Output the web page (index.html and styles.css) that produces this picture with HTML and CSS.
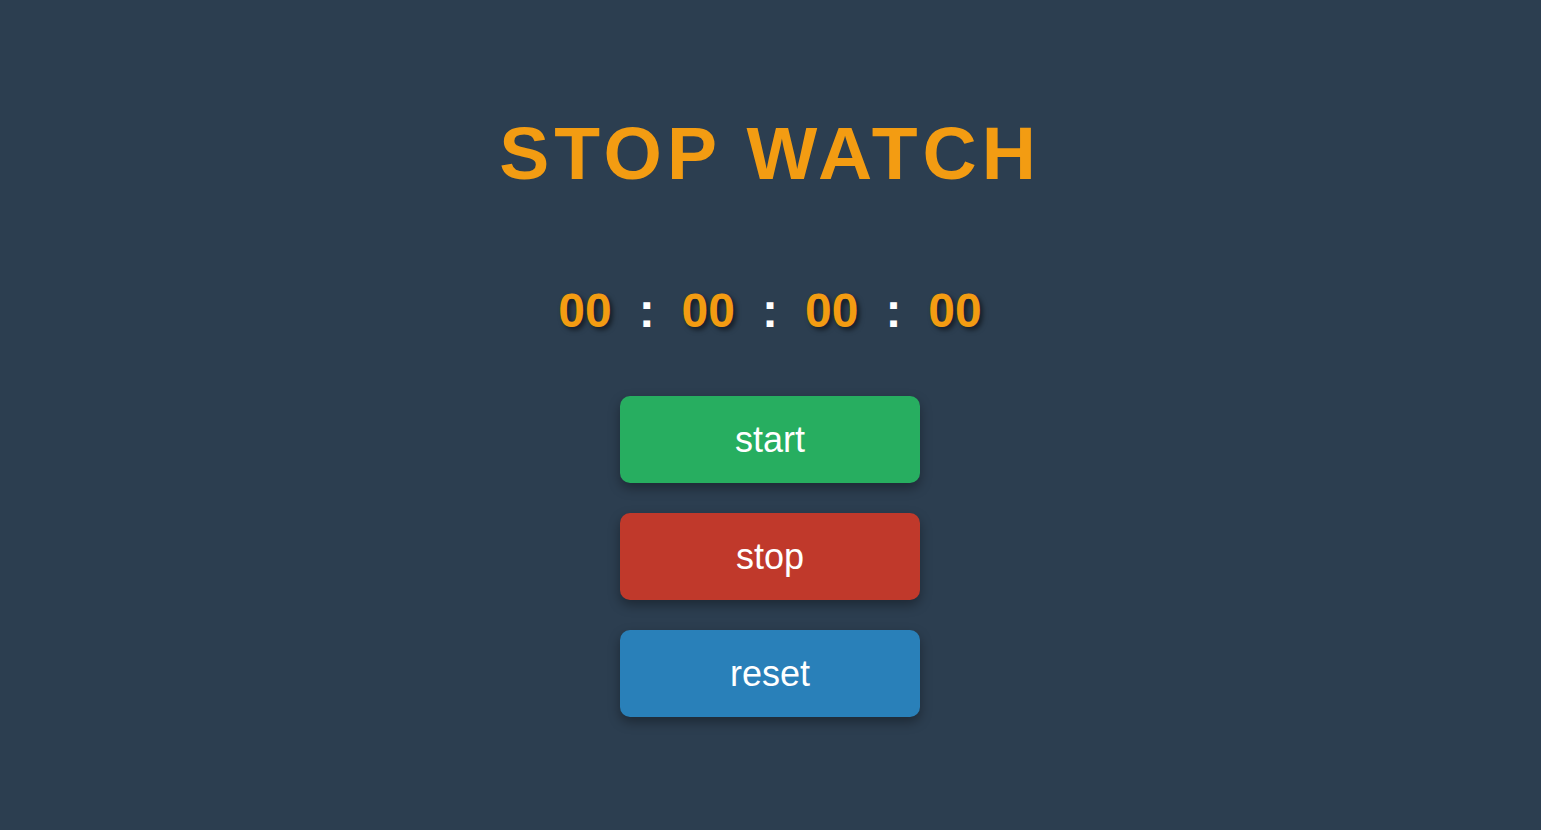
FILE: index.html
```html
<!DOCTYPE html>
<html lang="en">
<head>
<meta charset="utf-8">
<title>Stop Watch</title>
<link rel="stylesheet" href="styles.css">
</head>
<body>
<main class="app">
  <h1 class="title">STOP WATCH</h1>
  <div class="timer">
    <span class="digits">00</span>
    <span class="colon">:</span>
    <span class="digits">00</span>
    <span class="colon">:</span>
    <span class="digits">00</span>
    <span class="colon">:</span>
    <span class="digits">00</span>
  </div>
  <div class="buttons">
    <button class="btn btn-start">start</button>
    <button class="btn btn-stop">stop</button>
    <button class="btn btn-reset">reset</button>
  </div>
</main>
</body>
</html>
```

FILE: styles.css
```css
html, body {
  margin: 0;
  padding: 0;
  height: 100%;
}
body {
  background: #2c3e50;
  font-family: "Liberation Sans", Arial, sans-serif;
}
.app {
  display: flex;
  flex-direction: column;
  align-items: center;
  padding-top: 116px;
  padding-right: 1px;
}
.title {
  margin: 0;
  font-size: 75px;
  line-height: 75px;
  font-weight: bold;
  color: #f39c12;
  letter-spacing: 5px;
}
.timer {
  margin-top: 96px;
  display: flex;
  align-items: baseline;
  gap: 27px;
  font-size: 48px;
  line-height: 48px;
  font-weight: bold;
}
.digits {
  color: #f39c12;
  text-shadow: 3px 3px 5px rgba(0, 0, 0, 0.55);
}
.colon {
  color: #ffffff;
}
.buttons {
  margin-top: 61px;
  display: flex;
  flex-direction: column;
  gap: 30px;
}
.btn {
  width: 300px;
  height: 87px;
  border: none;
  border-radius: 10px;
  color: #ffffff;
  font-family: "Liberation Sans", Arial, sans-serif;
  font-size: 36px;
  box-shadow: 0 5px 12px rgba(0, 0, 0, 0.35);
  cursor: pointer;
  padding: 0;
}
.btn-start { background: #27ae60; }
.btn-stop { background: #c0392b; }
.btn-reset { background: #2980b9; }
```
